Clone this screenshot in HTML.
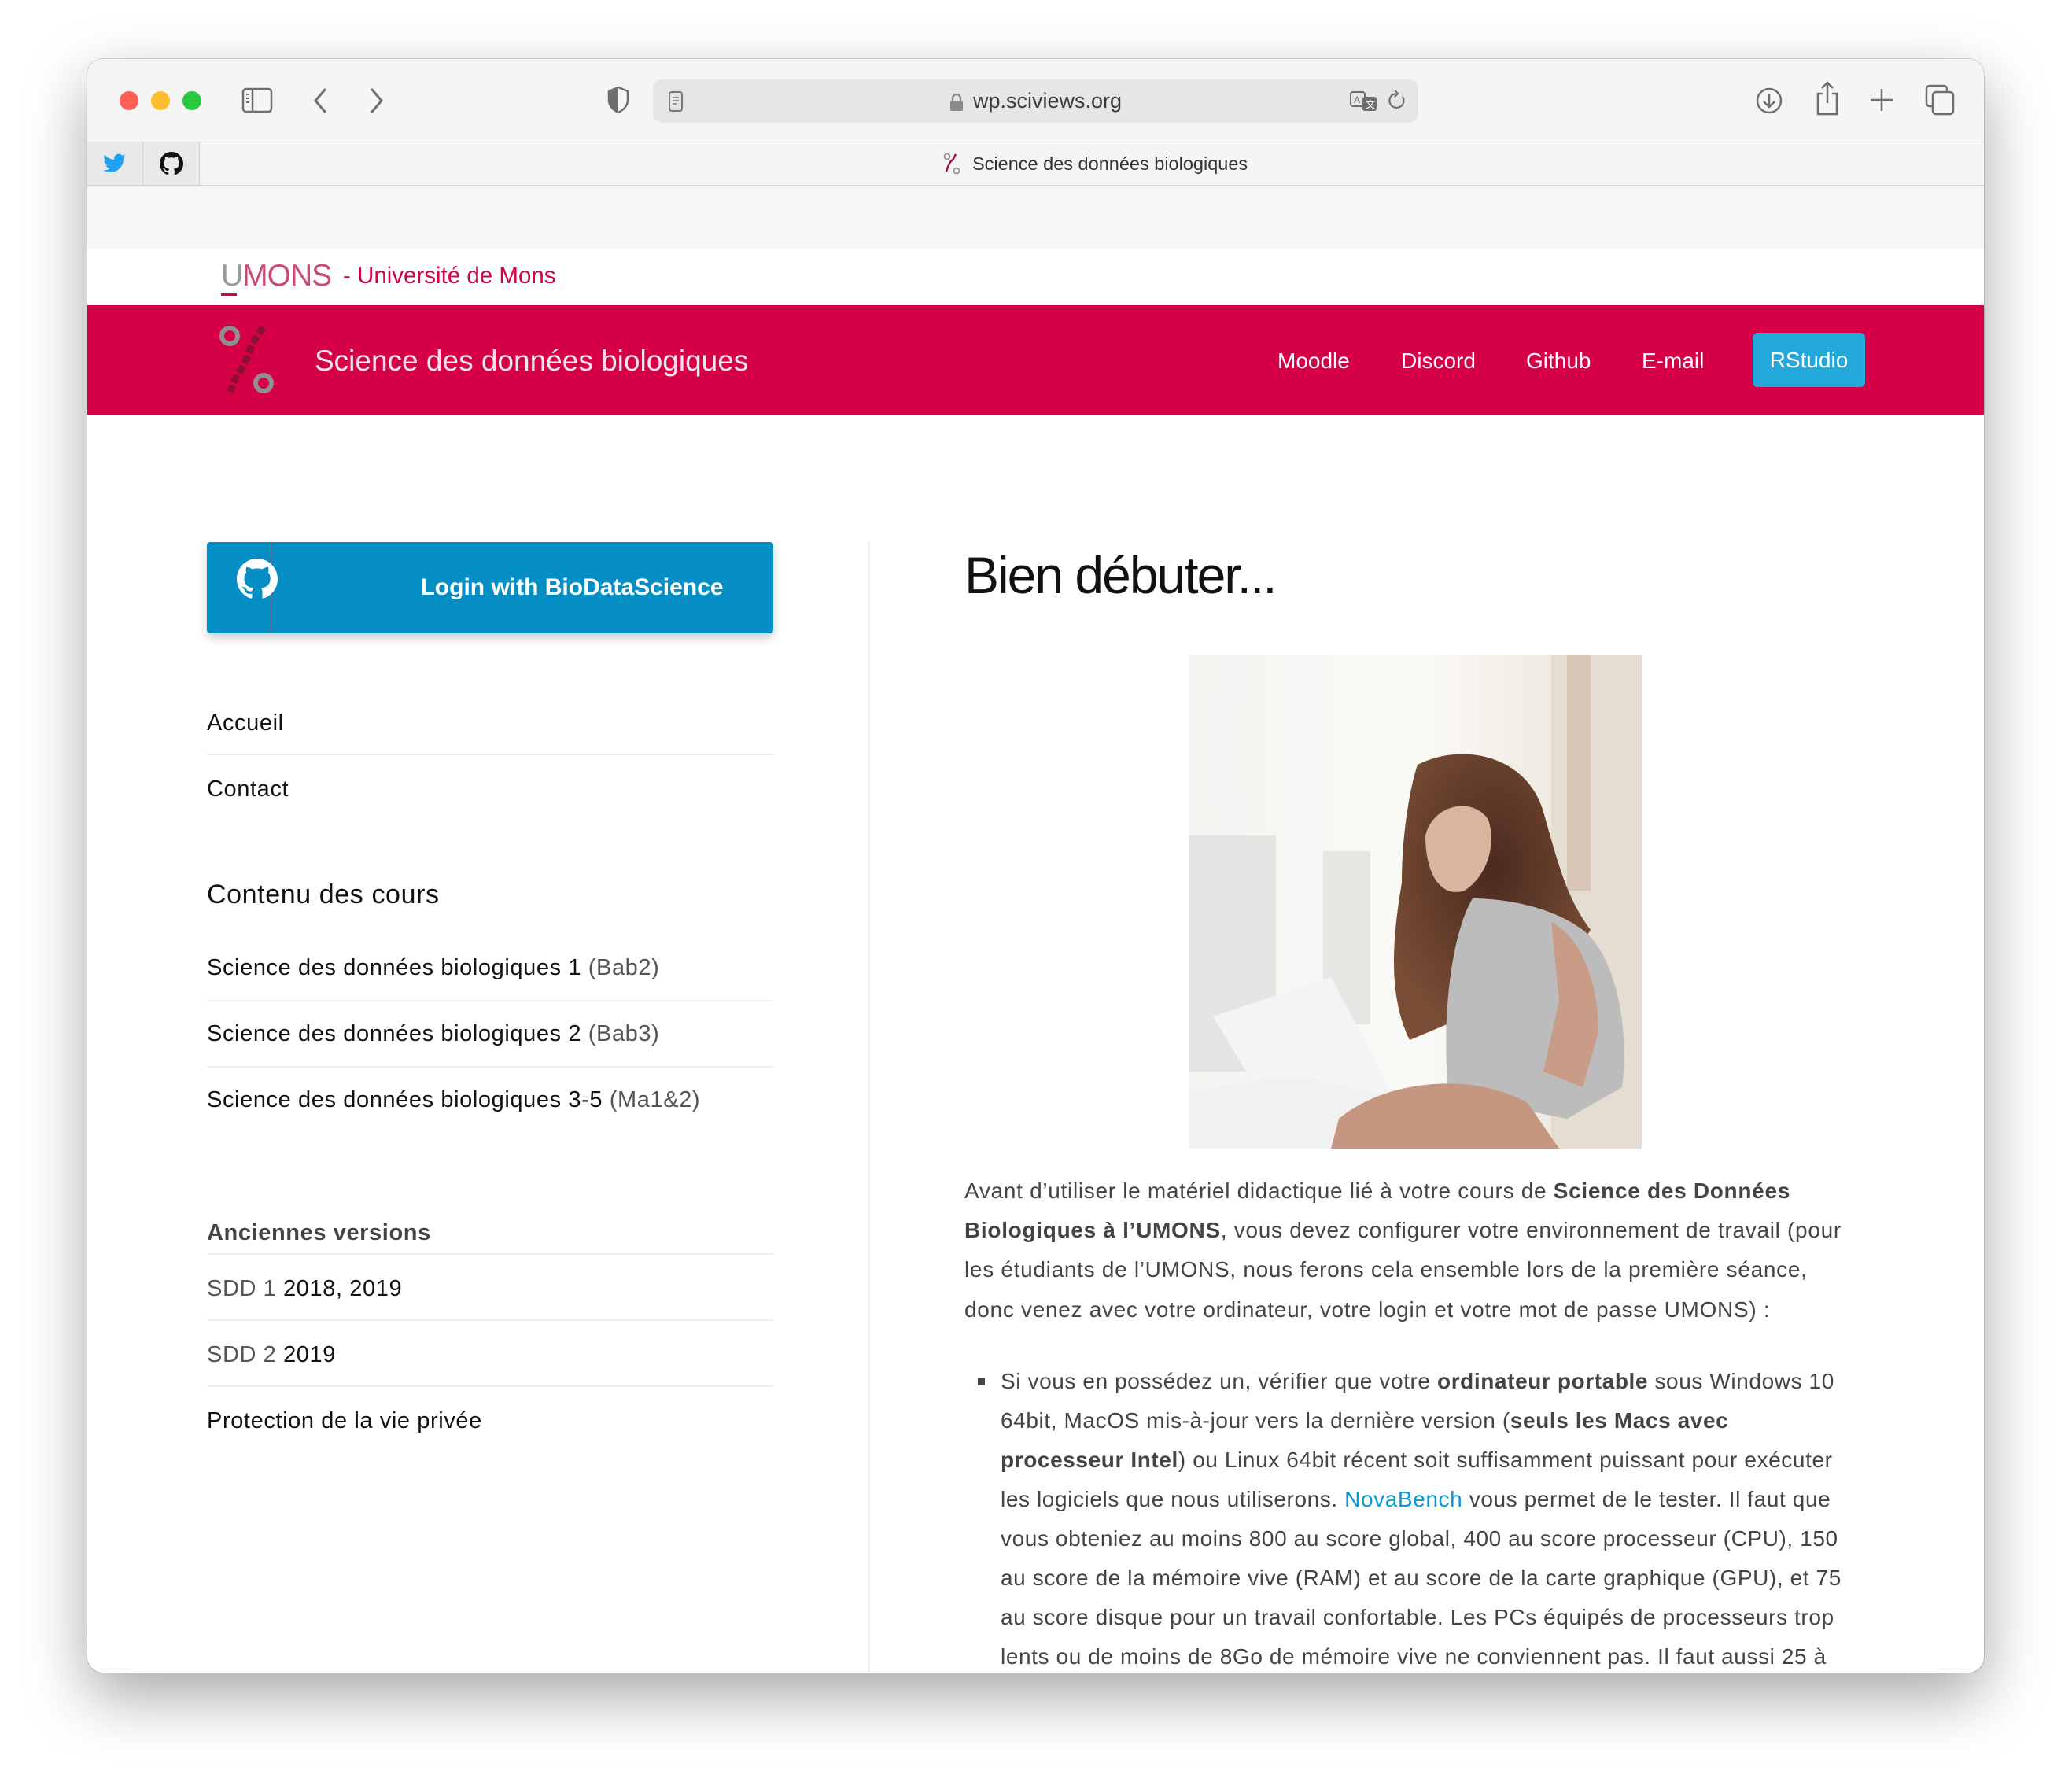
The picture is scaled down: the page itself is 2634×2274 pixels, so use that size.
<!DOCTYPE html>
<html><head><meta charset="utf-8">
<style>
*{margin:0;padding:0;box-sizing:border-box}
html,body{width:2634px;height:2274px;background:#fff;overflow:hidden;font-family:"Liberation Sans",Arial,sans-serif}
#win{position:absolute;left:111px;top:75px;width:2411px;height:2051px;border-radius:20px;overflow:hidden;background:#fff;box-shadow:0 30px 80px rgba(0,0,0,.35),0 0 0 1px rgba(0,0,0,.15)}
.a{position:absolute;white-space:nowrap}
.c{position:absolute;white-space:nowrap;line-height:50px}
.ic{position:absolute}
.side .c{letter-spacing:.6px}
</style></head><body>
<div id="win">
 <div class="a" style="left:0;top:0;width:2411px;height:105px;background:#f5f5f5"></div>
 <div class="a" style="left:41px;top:41px;width:24px;height:24px;border-radius:50%;background:#fe5f57"></div>
 <div class="a" style="left:81px;top:41px;width:24px;height:24px;border-radius:50%;background:#febc2e"></div>
 <div class="a" style="left:121px;top:41px;width:24px;height:24px;border-radius:50%;background:#28c840"></div>
 <svg class="ic" style="left:196px;top:36px" width="40" height="34" viewBox="0 0 40 34"><rect x="2" y="2" width="36" height="29" rx="4" fill="none" stroke="#6e6e6e" stroke-width="2.5"/><line x1="14" y1="2" x2="14" y2="31" stroke="#6e6e6e" stroke-width="2.5"/><path d="M6 9h4M6 14h4M6 19h4" stroke="#6e6e6e" stroke-width="2"/></svg>
 <svg class="ic" style="left:284px;top:36px" width="24" height="34" viewBox="0 0 24 34"><path d="M18 3L6 17l12 14" fill="none" stroke="#6e6e6e" stroke-width="3" stroke-linecap="round"/></svg>
 <svg class="ic" style="left:356px;top:36px" width="24" height="34" viewBox="0 0 24 34"><path d="M6 3l12 14L6 31" fill="none" stroke="#6e6e6e" stroke-width="3" stroke-linecap="round"/></svg>
 <svg class="ic" style="left:660px;top:34px" width="30" height="36" viewBox="0 0 30 36"><path d="M15 2L3 7v11c0 8 6 13 12 16 6-3 12-8 12-16V7z" fill="none" stroke="#6e6e6e" stroke-width="2.5"/><path d="M15 2L3 7v11c0 8 6 13 12 16z" fill="#6e6e6e"/></svg>
 <div class="a" style="left:719px;top:26px;width:973px;height:55px;border-radius:12px;background:#e6e6e6"></div>
 <svg class="ic" style="left:738px;top:40px" width="20" height="28" viewBox="0 0 20 28"><rect x="2" y="2" width="16" height="24" rx="3" fill="none" stroke="#777" stroke-width="2"/><path d="M6 9h8M6 13h8M6 17h5" stroke="#777" stroke-width="1.6"/></svg>
 <svg class="ic" style="left:1096px;top:43px" width="18" height="24" viewBox="0 0 18 24"><path d="M4 11V7a5 5 0 0110 0v4" fill="none" stroke="#8a8a8a" stroke-width="2.4"/><rect x="1" y="10" width="16" height="13" rx="2" fill="#8a8a8a"/></svg>
 <div class="a" style="left:1126px;top:36px;font-size:27px;color:#3a3a3a;line-height:34px">wp.sciviews.org</div>
 <svg class="ic" style="left:1604px;top:40px" width="40" height="30" viewBox="0 0 40 30"><rect x="2" y="2" width="18" height="18" rx="3" fill="none" stroke="#6e6e6e" stroke-width="2"/><text x="6" y="16" font-size="12" fill="#6e6e6e" font-family="Liberation Sans">A</text><rect x="17" y="8" width="18" height="18" rx="3" fill="#6e6e6e"/><text x="21" y="22" font-size="12" fill="#fff" font-family="Liberation Sans">文</text></svg>
 <svg class="ic" style="left:1652px;top:38px" width="26" height="32" viewBox="0 0 26 32"><path d="M20 10a9 9 0 11-9-4" fill="none" stroke="#6e6e6e" stroke-width="2.2"/><path d="M10 2l4 4-4 4" fill="none" stroke="#6e6e6e" stroke-width="2.2"/></svg>
 <svg class="ic" style="left:2120px;top:35px" width="36" height="36" viewBox="0 0 36 36"><circle cx="18" cy="18" r="15" fill="none" stroke="#6e6e6e" stroke-width="2.5"/><path d="M18 9v17M11 19l7 7 7-7" fill="none" stroke="#6e6e6e" stroke-width="2.5"/></svg>
 <svg class="ic" style="left:2196px;top:28px" width="32" height="44" viewBox="0 0 32 44"><path d="M10 16H4v26h24V16h-6" fill="none" stroke="#6e6e6e" stroke-width="2.5"/><path d="M16 2v26M9 9l7-7 7 7" fill="none" stroke="#6e6e6e" stroke-width="2.5"/></svg>
 <svg class="ic" style="left:2265px;top:36px" width="32" height="32" viewBox="0 0 32 32"><path d="M16 2v28M2 16h28" stroke="#6e6e6e" stroke-width="2.5"/></svg>
 <svg class="ic" style="left:2336px;top:32px" width="40" height="40" viewBox="0 0 40 40"><rect x="2" y="2" width="26" height="26" rx="4" fill="none" stroke="#6e6e6e" stroke-width="2.5"/><rect x="10" y="10" width="26" height="28" rx="4" fill="#f5f5f5" stroke="#6e6e6e" stroke-width="2.5"/></svg>
 <div class="a" style="left:0;top:105px;width:2411px;height:57px;background:#f5f5f5;border-top:1px solid #e8e8e8;border-bottom:2px solid #d6d6d6"></div>
 <div class="a" style="left:0;top:105px;width:71px;height:55px;background:#e9e9e9;border-right:1px solid #d2d2d2"></div>
 <div class="a" style="left:71px;top:105px;width:72px;height:55px;background:#e9e9e9;border-right:1px solid #d2d2d2"></div>
 <svg class="ic" style="left:20px;top:120px" width="30" height="26" viewBox="0 0 24 20"><path d="M23 2.3a9 9 0 01-2.7.8A4.8 4.8 0 0022.4.5a9.5 9.5 0 01-3 1.1 4.7 4.7 0 00-8 4.3A13.4 13.4 0 011.7 1a4.7 4.7 0 001.5 6.3 4.7 4.7 0 01-2.1-.6 4.7 4.7 0 003.8 4.6 4.8 4.8 0 01-2.1.1 4.7 4.7 0 004.4 3.3A9.5 9.5 0 010 16.6 13.4 13.4 0 007.3 18.8c8.7 0 13.5-7.2 13.5-13.5v-.6A9.6 9.6 0 0023 2.3z" fill="#1da1f2"/></svg>
 <svg class="ic" style="left:92px;top:118px" width="30" height="30" viewBox="0 0 16 16"><path fill="#111" d="M8 0C3.58 0 0 3.58 0 8c0 3.54 2.290 6.53 5.47 7.59.4.07.55-.17.55-.38 0-.19-.01-.82-.01-1.49-2.01.37-2.53-.49-2.69-.94-.09-.23-.48-.94-.82-1.13-.28-.15-.68-.52-.01-.53.63-.01 1.08.58 1.23.82.72 1.21 1.87.87 2.33.66.07-.52.28-.87.51-1.07-1.78-.2-3.64-.89-3.64-3.95 0-.87.31-1.59.82-2.15-.08-.2-.36-1.020.08-2.12 0 0 .67-.21 2.2.82.64-.18 1.32-.27 2-.27.68 0 1.36.09 2 .27 1.53-1.04 2.2-.82 2.2-.82.44 1.1.16 1.92.08 2.12.51.56.82 1.27.82 2.15 0 3.07-1.87 3.75-3.65 3.95.29.25.54.73.54 1.48 0 1.07-.01 1.93-.01 2.2 0 .21.15.46.55.38A8.013 8.013 0 0016 8c0-4.42-3.58-8-8-8z"/></svg>
 <svg class="ic" style="left:1088px;top:119px" width="22" height="28" viewBox="0 0 22 28"><circle cx="5" cy="5" r="3.5" fill="none" stroke="#888" stroke-width="1.6"/><circle cx="17" cy="23" r="3.5" fill="none" stroke="#888" stroke-width="1.6"/><path d="M16 2l-3 6-4 4-3 6-2 6" stroke="#a01838" stroke-width="2.5" fill="none"/></svg>
 <div class="a" style="left:1125px;top:118px;font-size:23.5px;color:#333;line-height:30px">Science des données biologiques</div>
 <div class="a" style="left:0;top:162px;width:2411px;height:79px;background:#f6f6f6"></div>
 <div class="a" style="left:0;top:241px;width:2411px;height:72px;background:#fff"></div>
 <div class="a" style="left:170px;top:254px;font-size:39px;letter-spacing:-1px;line-height:44px"><span style="color:#9a9a9a">U</span><span style="color:#c94a73">MONS</span></div>
 <div class="a" style="left:170px;top:298px;width:20px;height:3px;background:#d4004a"></div>
 <div class="a" style="left:325px;top:258px;font-size:29.5px;color:#d4004a;line-height:36px">- Université de Mons</div>
 <div class="a" style="left:0;top:313px;width:2411px;height:139px;background:#d50045"></div>
 <svg class="ic" style="left:166px;top:337px" width="74" height="92" viewBox="0 0 74 92"><circle cx="15" cy="15" r="10" fill="none" stroke="#8f8f8f" stroke-width="6"/><circle cx="58" cy="75" r="10" fill="none" stroke="#8f8f8f" stroke-width="6"/><path d="M58 4c-6 8-12 16-16 26s-8 22-14 30-10 18-12 26" stroke="#8a1030" stroke-width="9" fill="none" stroke-dasharray="10 4"/></svg>
 <div class="a" style="left:289px;top:361px;font-size:37px;color:#f2e6ea;line-height:46px">Science des données biologiques</div>
 <div class="a" style="left:1513px;top:366px;font-size:28px;color:#fff;line-height:36px">Moodle</div>
 <div class="a" style="left:1670px;top:366px;font-size:28px;color:#fff;line-height:36px">Discord</div>
 <div class="a" style="left:1829px;top:366px;font-size:28px;color:#fff;line-height:36px">Github</div>
 <div class="a" style="left:1976px;top:366px;font-size:28px;color:#fff;line-height:36px">E-mail</div>
 <div class="a" style="left:2117px;top:348px;width:143px;height:69px;border-radius:6px;background:#23a8dc;color:#fff;font-size:28px;line-height:69px;text-align:center">RStudio</div>
 <div class="a" style="left:152px;top:614px;width:720px;height:116px;background:#048ec3;border-radius:4px;box-shadow:0 6px 12px rgba(0,0,0,.2)"></div>
 <div class="a" style="left:233px;top:614px;width:1px;height:116px;background:#5a6e9a"></div>
 <svg class="ic" style="left:190px;top:635px" width="52" height="52" viewBox="0 0 16 16"><path fill="#fff" d="M8 0C3.58 0 0 3.58 0 8c0 3.54 2.29 6.53 5.47 7.59.4.07.55-.17.55-.38 0-.19-.01-.82-.01-1.49-2.01.37-2.53-.49-2.69-.94-.09-.23-.48-.94-.82-1.13-.28-.15-.68-.52-.01-.53.63-.01 1.08.58 1.23.82.72 1.21 1.87.87 2.33.66.07-.52.28-.87.51-1.07-1.78-.2-3.64-.89-3.64-3.95 0-.87.31-1.59.82-2.15-.08-.2-.36-1.02.08-2.12 0 0 .67-.21 2.2.82.64-.18 1.32-.27 2-.27.68 0 1.36.09 2 .27 1.53-1.04 2.2-.82 2.2-.82.44 1.1.16 1.92.08 2.12.51.56.82 1.27.82 2.15 0 3.07-1.87 3.75-3.65 3.95.29.25.54.73.54 1.48 0 1.07-.01 1.93-.01 2.2 0 .21.15.46.55.38A8.013 8.013 0 0016 8c0-4.42-3.58-8-8-8z"/></svg>
 <div class="a" style="left:356px;top:652px;width:520px;text-align:center;font-size:30px;font-weight:bold;color:#fff;line-height:40px">Login with BioDataScience</div>

 <div class="side">
 <div class="c" style="left:152px;top:819px;font-size:29px;color:#111">Accueil</div>
 <div class="a" style="left:152px;top:883px;width:720px;height:2px;background:#eceef1"></div>
 <div class="c" style="left:152px;top:903px;font-size:29px;color:#111">Contact</div>
 <div class="c" style="left:152px;top:1037px;font-size:34px;color:#111">Contenu des cours</div>
 <div class="c" style="left:152px;top:1130px;font-size:29px;color:#111">Science des données biologiques 1 <span style="color:#555">(Bab2)</span></div>
 <div class="a" style="left:152px;top:1196px;width:720px;height:2px;background:#eceef1"></div>
 <div class="c" style="left:152px;top:1214px;font-size:29px;color:#111">Science des données biologiques 2 <span style="color:#555">(Bab3)</span></div>
 <div class="a" style="left:152px;top:1280px;width:720px;height:2px;background:#eceef1"></div>
 <div class="c" style="left:152px;top:1298px;font-size:29px;color:#111">Science des données biologiques 3-5 <span style="color:#555">(Ma1&amp;2)</span></div>
 <div class="c" style="left:152px;top:1467px;font-size:29px;color:#444;font-weight:bold">Anciennes versions</div>
 <div class="a" style="left:152px;top:1518px;width:720px;height:2px;background:#eceef1"></div>
 <div class="c" style="left:152px;top:1538px;font-size:29px;color:#111"><span style="color:#555">SDD 1</span> 2018, 2019</div>
 <div class="a" style="left:152px;top:1602px;width:720px;height:2px;background:#eceef1"></div>
 <div class="c" style="left:152px;top:1622px;font-size:29px;color:#111"><span style="color:#555">SDD 2</span> 2019</div>
 <div class="a" style="left:152px;top:1686px;width:720px;height:2px;background:#eceef1"></div>
 <div class="c" style="left:152px;top:1706px;font-size:29px;color:#111">Protection de la vie privée</div>
 </div>

 <div class="a" style="left:993px;top:614px;width:2px;height:1500px;background:#eef0f2"></div>

 <div class="a" style="left:1115px;top:614px;font-size:66px;color:#111;line-height:84px;letter-spacing:-2px">Bien débuter...</div>
 <svg class="ic" style="left:1401px;top:757px" width="575" height="628" viewBox="0 0 575 628">
  <defs>
   <linearGradient id="bg" x1="0" y1="0" x2="1" y2="0"><stop offset="0" stop-color="#f3f3f1"/><stop offset=".5" stop-color="#fbfaf6"/><stop offset="1" stop-color="#e8e0d6"/></linearGradient>
   <radialGradient id="hair" cx=".5" cy=".4" r=".6"><stop offset="0" stop-color="#4a2a1e"/><stop offset="1" stop-color="#7a4e36"/></radialGradient>
  </defs>
  <rect width="575" height="628" fill="url(#bg)"/>
  <rect x="0" y="230" width="110" height="300" fill="#e4e4e2"/>
  <rect x="120" y="0" width="50" height="500" fill="#f7f7f7"/>
  <rect x="170" y="250" width="60" height="220" fill="#e8e6e2"/>
  <rect x="460" y="0" width="115" height="628" fill="#e6ddd2"/>
  <rect x="480" y="0" width="30" height="300" fill="#d7c6b6"/>
  <path d="M290 140c60-30 140-10 160 60 20 70 30 110 60 150l-40 60-190 80c-30-60-20-140-10-200 0-60 10-120 20-150z" fill="url(#hair)"/>
  <path d="M300 230c10-40 60-50 80-20 10 30 0 70-30 90-30 10-50-20-50-70z" fill="#d9b49e"/>
  <path d="M360 310c40 0 100 10 140 40 40 30 60 120 50 200l-70 40-150-30c-10-80 0-200 30-250z" fill="#bdbcbc"/>
  <path d="M460 340c40 20 60 80 60 140l-20 70-50-20 20-90z" fill="#c89c86"/>
  <path d="M30 460l150-50 90 170-150 30z" fill="#f4f4f6"/>
  <path d="M0 560c60-20 140-30 200-10 80 20 160 10 220 30l30 48H0z" fill="#f1f1f1"/>
  <path d="M190 590c60-50 170-60 240-20l40 58H180z" fill="#c59680"/>
 </svg>

 <div style="position:absolute;left:1115px;top:0;font-size:28px;color:#444;letter-spacing:.7px">
  <div class="c" style="top:1414px">Avant d’utiliser le matériel didactique lié à votre cours de <b>Science des Données</b></div>
  <div class="c" style="top:1464px"><b>Biologiques à l’UMONS</b>, vous devez configurer votre environnement de travail (pour</div>
  <div class="c" style="top:1514px">les étudiants de l’UMONS, nous ferons cela ensemble lors de la première séance,</div>
  <div class="c" style="top:1565px">donc venez avec votre ordinateur, votre login et votre mot de passe UMONS) :</div>
 </div>
 <div class="a" style="left:1132px;top:1677px;width:9px;height:9px;background:#444"></div>
 <div style="position:absolute;left:1161px;top:0;font-size:28px;color:#444;letter-spacing:.6px">
  <div class="c" style="top:1656px">Si vous en possédez un, vérifier que votre <b>ordinateur portable</b> sous Windows 10</div>
  <div class="c" style="top:1706px">64bit, MacOS mis-à-jour vers la dernière version (<b>seuls les Macs avec</b></div>
  <div class="c" style="top:1756px"><b>processeur Intel</b>) ou Linux 64bit récent soit suffisamment puissant pour exécuter</div>
  <div class="c" style="top:1806px">les logiciels que nous utiliserons. <span style="color:#0a9ad6">NovaBench</span> vous permet de le tester. Il faut que</div>
  <div class="c" style="top:1856px">vous obteniez au moins 800 au score global, 400 au score processeur (CPU), 150</div>
  <div class="c" style="top:1906px">au score de la mémoire vive (RAM) et au score de la carte graphique (GPU), et 75</div>
  <div class="c" style="top:1956px">au score disque pour un travail confortable. Les PCs équipés de processeurs trop</div>
  <div class="c" style="top:2006px">lents ou de moins de 8Go de mémoire vive ne conviennent pas. Il faut aussi 25 à</div>
 </div>
</div>
</body></html>
